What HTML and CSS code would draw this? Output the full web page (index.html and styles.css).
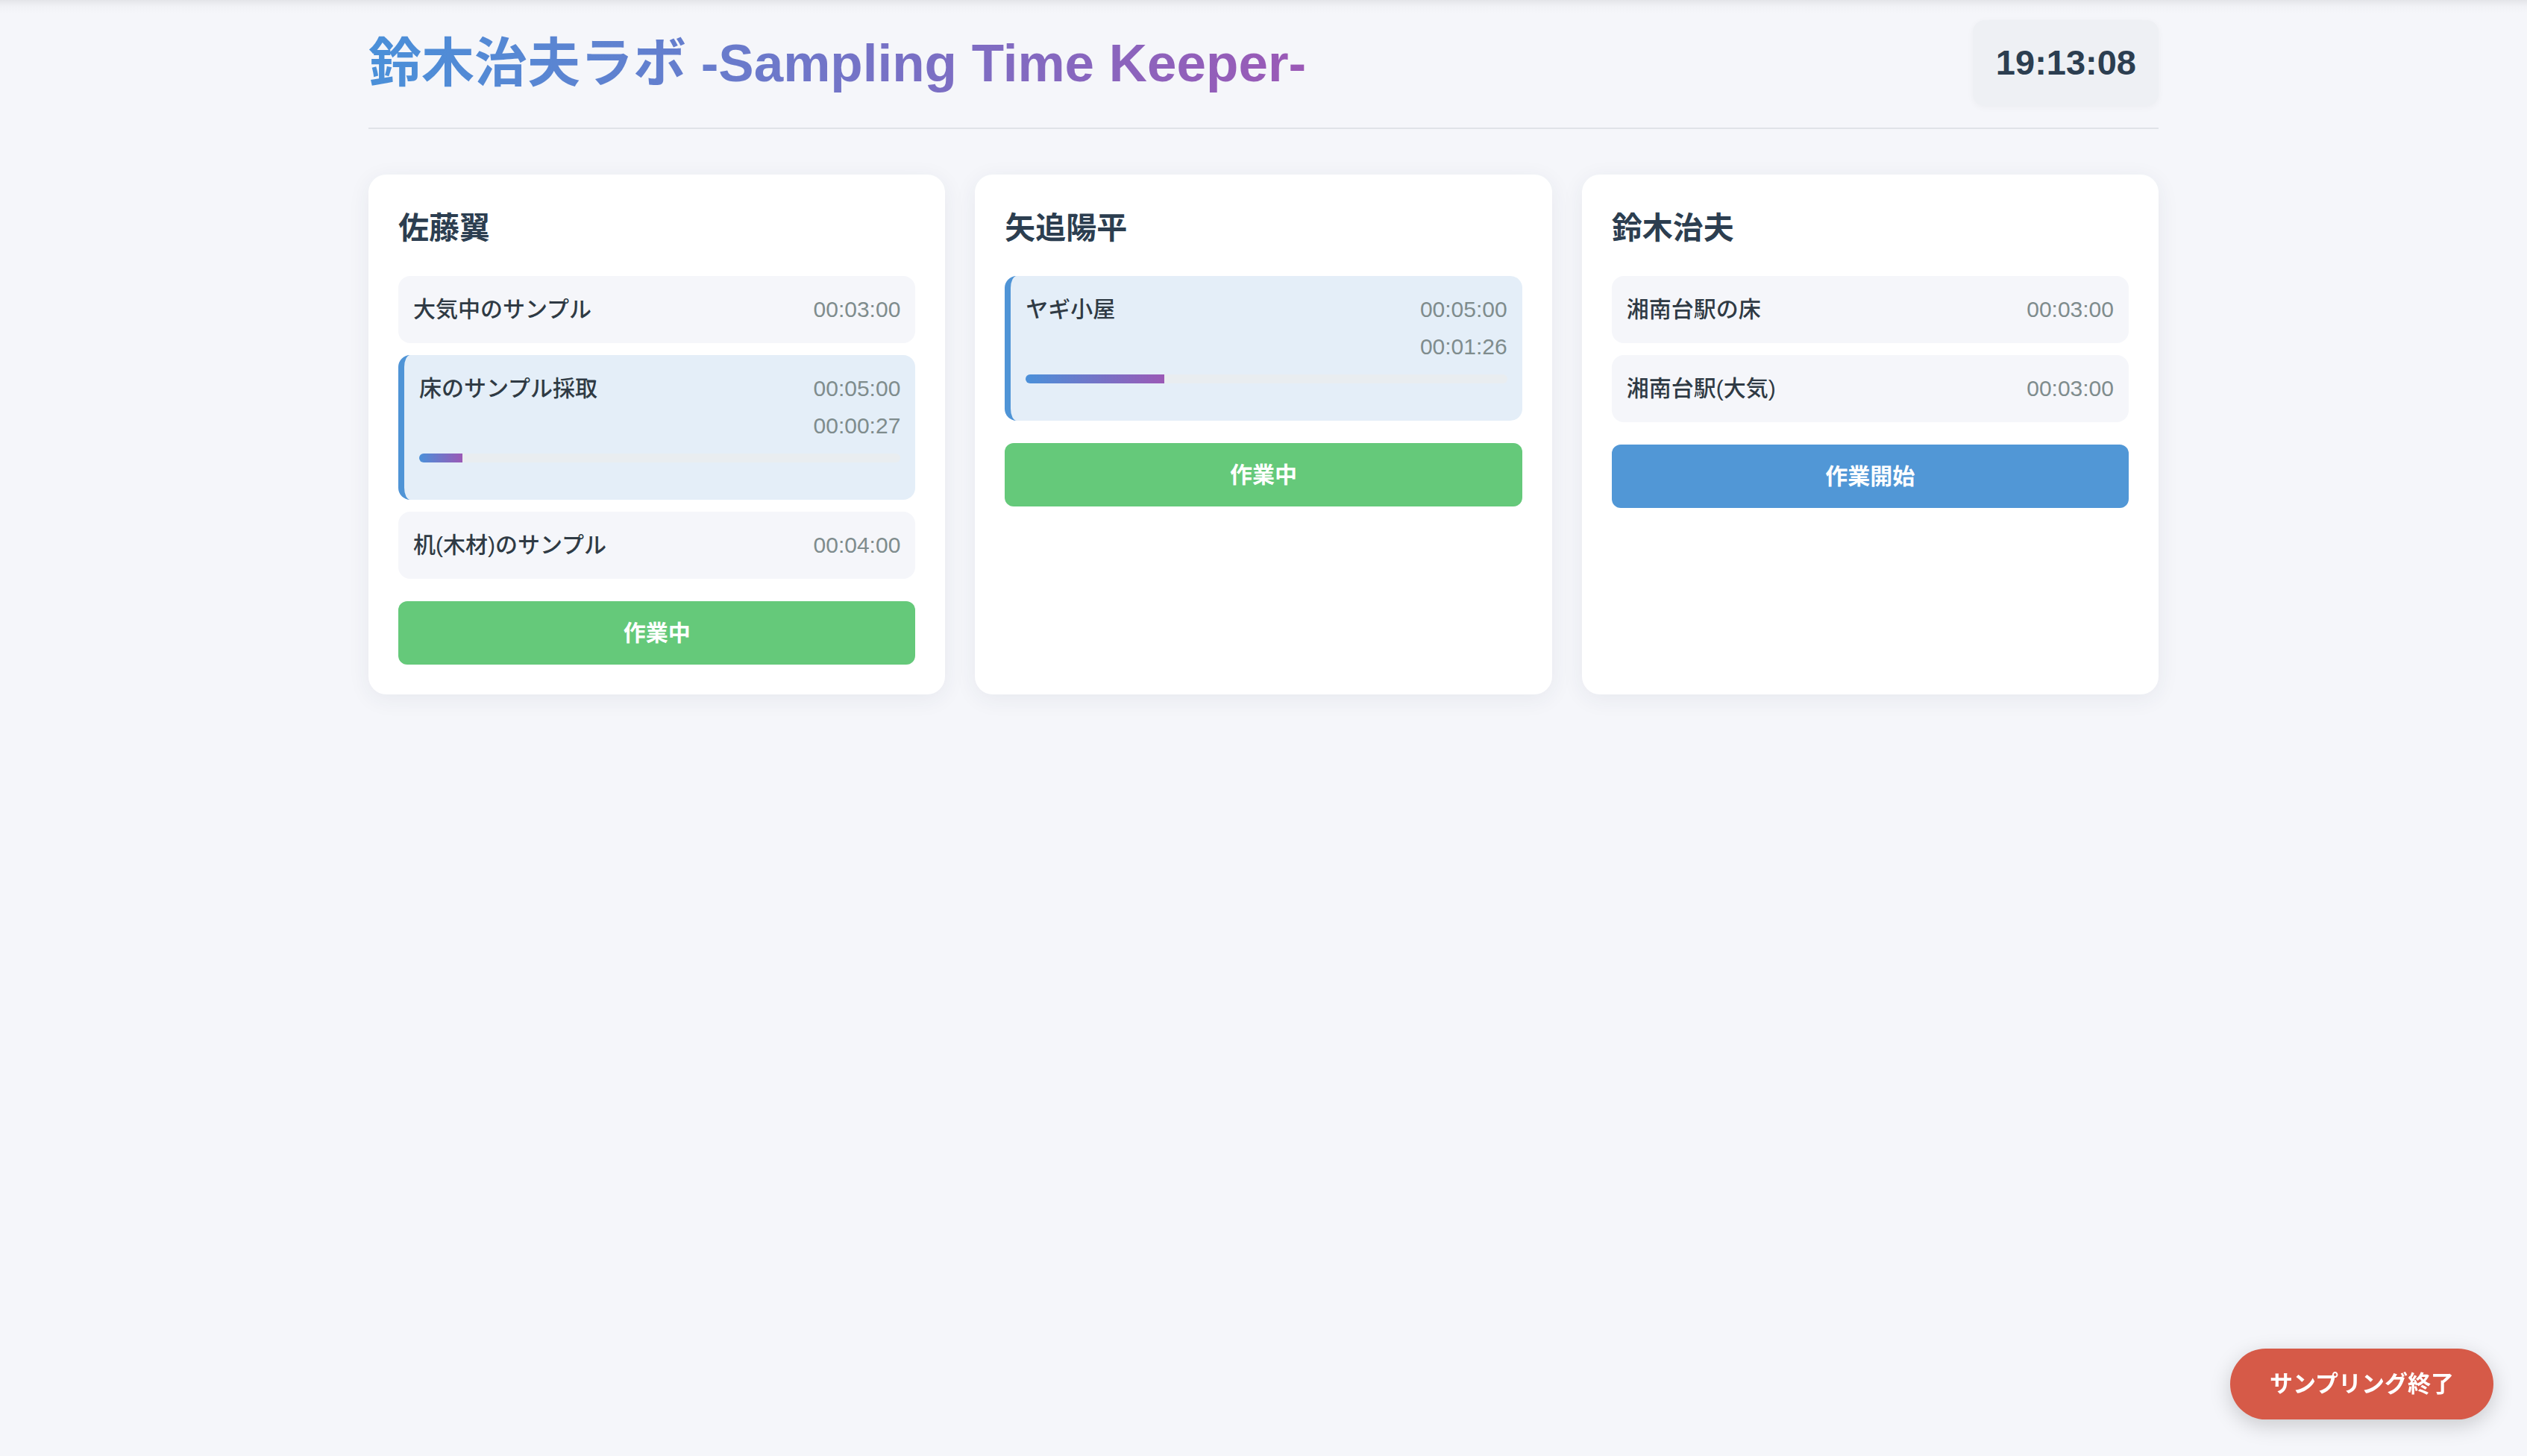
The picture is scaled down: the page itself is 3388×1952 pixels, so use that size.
FILE: index.html
```html
<!DOCTYPE html>
<html lang="ja">
<head>
<meta charset="utf-8">
<title>鈴木治夫ラボ -Sampling Time Keeper-</title>
<link rel="stylesheet" href="styles.css">
</head>
<body>
<div class="container">
  <header class="header">
    <h1 class="title">鈴木治夫ラボ -Sampling Time Keeper-</h1>
    <div class="clock">19:13:08</div>
  </header>

  <main class="grid">
    <section class="card">
      <h2 class="card-title">佐藤翼</h2>
      <div class="item">
        <div class="row"><span class="name">大気中のサンプル</span><span class="time">00:03:00</span></div>
      </div>
      <div class="item active">
        <div class="row"><span class="name">床のサンプル採取</span><span class="time">00:05:00</span></div>
        <div class="elapsed time">00:00:27</div>
        <div class="track"><div class="fill" style="width: 9%"></div></div>
      </div>
      <div class="item">
        <div class="row"><span class="name">机(木材)のサンプル</span><span class="time">00:04:00</span></div>
      </div>
      <button class="btn btn-working">作業中</button>
    </section>

    <section class="card">
      <h2 class="card-title">矢追陽平</h2>
      <div class="item active">
        <div class="row"><span class="name">ヤギ小屋</span><span class="time">00:05:00</span></div>
        <div class="elapsed time">00:01:26</div>
        <div class="track"><div class="fill" style="width: 28.7%"></div></div>
      </div>
      <button class="btn btn-working">作業中</button>
    </section>

    <section class="card">
      <h2 class="card-title">鈴木治夫</h2>
      <div class="item">
        <div class="row"><span class="name">湘南台駅の床</span><span class="time">00:03:00</span></div>
      </div>
      <div class="item">
        <div class="row"><span class="name">湘南台駅(大気)</span><span class="time">00:03:00</span></div>
      </div>
      <button class="btn btn-start">作業開始</button>
    </section>
  </main>
</div>

<button class="finish">サンプリング終了</button>
</body>
</html>
```

FILE: styles.css
```css
* {
  box-sizing: border-box;
}

html, body {
  margin: 0;
  padding: 0;
}

body {
  min-height: 100vh;
  background: linear-gradient(to bottom, #e4e5e9 0px, #f0f1f5 8px, #f5f6fa 18px) no-repeat, #f5f6fa;
  font-family: "Liberation Sans", "Noto Sans CJK JP", sans-serif;
  color: #2c3e50;
}

.container {
  width: 2400px;
  margin: 0 auto;
  padding-top: 27px;
}

.header {
  display: flex;
  justify-content: space-between;
  align-items: center;
  padding-bottom: 29px;
  border-bottom: 2px solid #e0e3e8;
  margin-bottom: 61px;
}

.title {
  margin: 0;
  font-size: 71px;
  line-height: 84px;
  font-weight: 700;
  background: linear-gradient(90deg, #4a90d9 0%, #9b59b6 100%);
  -webkit-background-clip: text;
  background-clip: text;
  color: transparent;
}

.clock {
  background: #eef0f4;
  border-radius: 16px;
  padding: 28px 30px 29px 31px;
  font-size: 47px;
  line-height: 58px;
  font-weight: 700;
  color: #2c3e50;
  box-shadow: 0 2px 10px rgba(0, 0, 0, 0.04);
}

.grid {
  display: grid;
  grid-template-columns: repeat(3, 1fr);
  gap: 40px;
  align-items: stretch;
}

.card {
  background: #ffffff;
  border-radius: 24px;
  padding: 40px;
  box-shadow: 0 6px 30px rgba(40, 50, 80, 0.07);
  display: flex;
  flex-direction: column;
}

.card-title {
  margin: 0 0 32px;
  font-size: 41px;
  line-height: 64px;
  font-weight: 700;
  color: #2c3e50;
}

.item {
  background: #f5f6fa;
  border-radius: 16px;
  padding: 22px 20px;
  margin-bottom: 16px;
}

.item.active {
  background: #e4eef8;
  border-left: 8px solid #4f94d6;
}

.row {
  display: flex;
  justify-content: space-between;
  align-items: center;
  line-height: 46px;
}

.name {
  font-size: 30px;
  font-weight: 500;
  color: #2f3a44;
}

.time {
  font-size: 30px;
  color: #7f8c8d;
}

.elapsed {
  margin-top: 4px;
  height: 46px;
  line-height: 46px;
  text-align: right;
}

.track {
  margin: 14px 0 28px;
  height: 12px;
  border-radius: 6px;
  background: #e9edf0;
  overflow: hidden;
}

.fill {
  height: 100%;
  background: linear-gradient(90deg, #4a90d9, #9b59b6);
}

.btn {
  display: block;
  width: 100%;
  margin-top: 14px;
  border: none;
  border-radius: 12px;
  padding: 20px 0;
  font-family: "Liberation Sans", "Noto Sans CJK JP", sans-serif;
  font-size: 30px;
  line-height: 45px;
  font-weight: 700;
  color: #ffffff;
  cursor: pointer;
}

.btn-working {
  background: #65c97a;
}

.btn-start {
  background: #5197d6;
}

.finish {
  position: fixed;
  right: 45px;
  bottom: 49px;
  border: none;
  border-radius: 48px;
  background: #d65a48;
  color: #ffffff;
  font-family: "Liberation Sans", "Noto Sans CJK JP", sans-serif;
  font-size: 31px;
  line-height: 47px;
  font-weight: 700;
  padding: 24px 53px;
  box-shadow: 0 8px 28px rgba(0, 0, 0, 0.18);
  cursor: pointer;
}
```
